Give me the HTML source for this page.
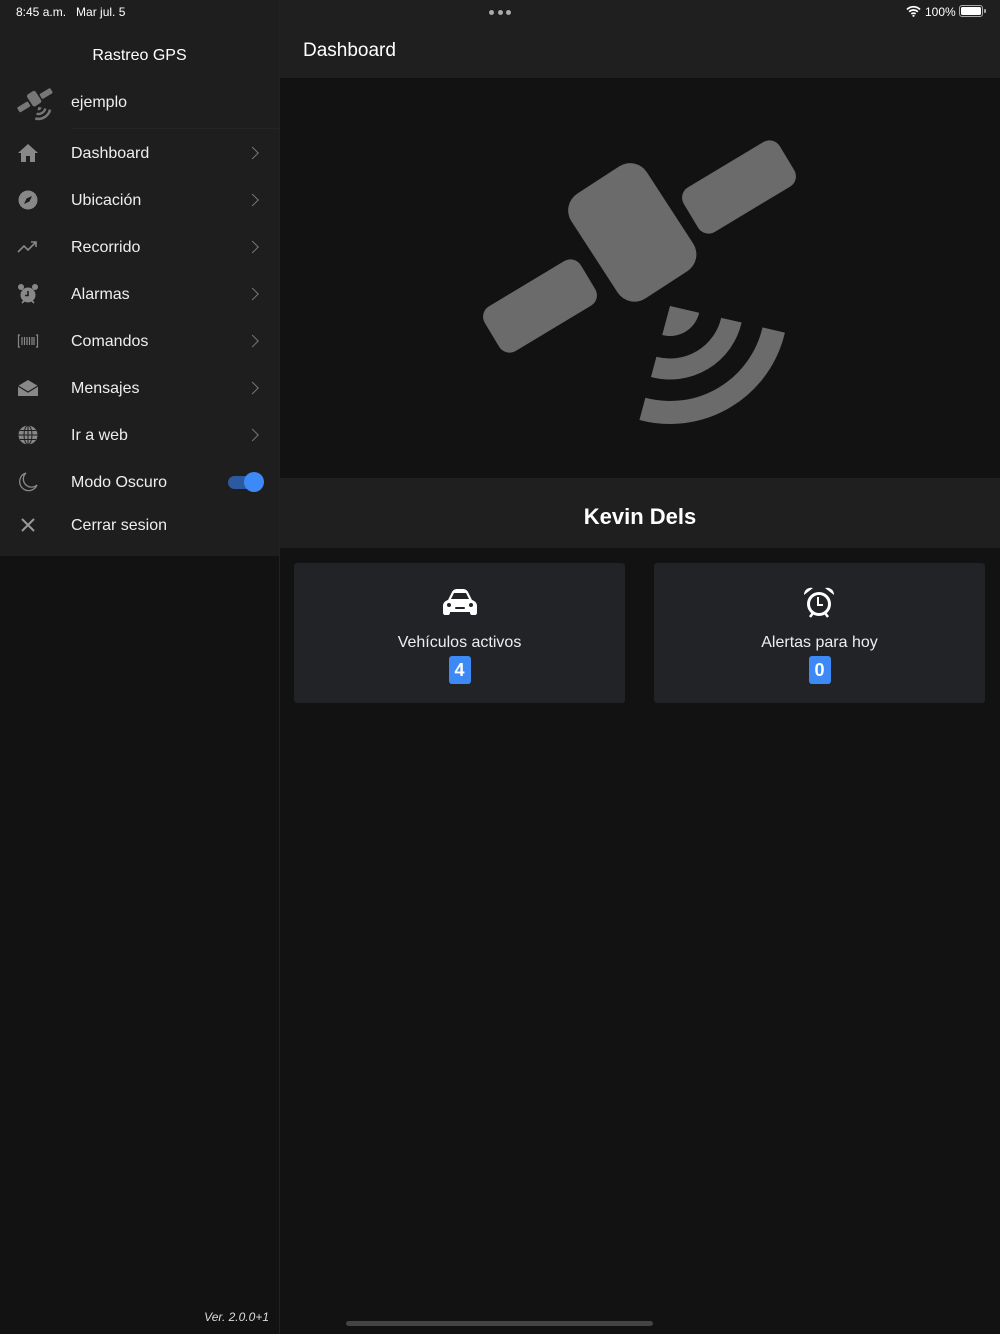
<!DOCTYPE html>
<html><head><meta charset="utf-8"><style>
*{margin:0;padding:0;box-sizing:border-box}
body{width:1000px;height:1334px;background:#121212;font-family:"Liberation Sans",sans-serif;color:#fff;position:relative;overflow:hidden}
.a{position:absolute}
.side{left:0;top:0;width:279px;height:556px;background:#1e1e1e}
.sb{left:279px;top:0;width:1px;height:1334px;background:#222}
.row{position:absolute;left:71px;font-size:16px;color:#eee;transform:translateY(-45%)}
.chev{position:absolute;left:248px;width:9px;height:9px;border-right:1.6px solid #777;border-top:1.6px solid #777;transform:translateY(-50%) rotate(45deg)}
.ic{position:absolute;left:17px;width:22px;height:22px;transform:translateY(-50%)}
.card{position:absolute;top:563px;width:331px;height:140px;background:#222327;border-radius:3px;text-align:center}
.card .t{position:absolute;top:71px;width:100%;font-size:16px;color:#eee}
.badge{position:absolute;top:93px;left:50%;margin-left:-11px;width:22px;height:28px;background:#3d8af7;border-radius:3px;font-weight:bold;font-size:18px;line-height:28px;color:#fff}
</style></head><body>
<div class="a side"></div>
<div class="a sb"></div>
<div class="a" style="left:280px;top:0;width:720px;height:78px;background:#1f1f1f"></div>
<div class="a" style="left:280px;top:478px;width:720px;height:70px;background:#1f1f1f"></div>

<div class="a" style="left:16px;top:5px;font-size:12px;color:#fff">8:45 a.m.&nbsp;&nbsp; Mar jul. 5</div>
<div class="a" style="left:489px;top:10px;width:22px;height:5px;display:flex;justify-content:space-between"><i style="width:5px;height:5px;border-radius:50%;background:#aaa"></i><i style="width:5px;height:5px;border-radius:50%;background:#aaa"></i><i style="width:5px;height:5px;border-radius:50%;background:#aaa"></i></div>
<svg class="a" style="left:906px;top:5px" width="15" height="12" viewBox="0 0 15 12"><path d="M1 4.5a9 9 0 0 1 13 0M3.2 6.8a6 6 0 0 1 8.6 0M5.4 9a3 3 0 0 1 4.2 0" stroke="#fff" stroke-width="1.8" fill="none"/><circle cx="7.5" cy="10.8" r="1.1" fill="#fff"/></svg>
<div class="a" style="left:925px;top:5px;font-size:12px">100%</div>
<div class="a" style="left:959px;top:5px;width:24px;height:12px;border:1px solid #aaa;border-radius:3px;padding:1px"><div style="width:100%;height:100%;background:#fff;border-radius:1.5px"></div></div>
<div class="a" style="left:984px;top:9px;width:2px;height:4px;background:#aaa;border-radius:1px"></div>

<div class="a" style="left:0;width:279px;top:47px;text-align:center;font-size:16px;color:#fff">Rastreo GPS</div>

<svg class="a" style="left:15px;top:86px" width="40" height="36" viewBox="470 120 340 320"><g fill="#777"><rect x="587" y="170" width="90" height="125" rx="20" transform="rotate(-33 632 232)"/><rect x="484" y="280" width="112" height="52" rx="12" transform="rotate(-31 540 306)"/><rect x="683" y="161" width="112" height="52" rx="12" transform="rotate(-31 739 187)"/><path d="M670,306 L699.2,312.7 A30 30 0 0 1 662.2,335 Z"/></g><g stroke="#777" fill="none"><path d="M731.4,320.2 A63 63 0 0 1 653.7,366.9" stroke-width="21"/><path d="M773.7,330 A106.5 106.5 0 0 1 642.4,408.9" stroke-width="23"/></g></svg>
<div class="row" style="top:102px">ejemplo</div>
<div class="a" style="left:71px;top:128px;width:208px;height:1px;background:#252525"></div>

<svg class="ic" style="top:153px" viewBox="0 0 22 22"><path d="M11 2L1 11h3v9h5v-6h4v6h5v-9h3z" fill="#888"/></svg>
<div class="row" style="top:153px">Dashboard</div><div class="chev" style="top:153px"></div>

<svg class="ic" style="top:200px" viewBox="0 0 22 22"><circle cx="11" cy="11" r="9.5" fill="#888"/><path d="M15 7l-5.5 2.5L7 15l5.5-2.5z" fill="#1e1e1e"/></svg>
<div class="row" style="top:200px">Ubicación</div><div class="chev" style="top:200px"></div>

<svg class="ic" style="top:247px" viewBox="0 0 22 22"><path d="M1 16l6-6 4 4 8-8M14 6h5v5" stroke="#888" stroke-width="1.6" fill="none"/></svg>
<div class="row" style="top:247px">Recorrido</div><div class="chev" style="top:247px"></div>

<svg class="ic" style="top:294px" viewBox="0 0 22 22"><circle cx="11" cy="12" r="7.5" fill="#888"/><circle cx="4" cy="4" r="3" fill="#888"/><circle cx="18" cy="4" r="3" fill="#888"/><path d="M11 8v4.5h-3" stroke="#1e1e1e" stroke-width="1.6" fill="none"/><path d="M5 20l2-2M17 20l-2-2" stroke="#888" stroke-width="1.6"/></svg>
<div class="row" style="top:294px">Alarmas</div><div class="chev" style="top:294px"></div>

<svg class="ic" style="top:341px" viewBox="0 0 22 22"><path d="M3 5H1.5v12H3M19 5h1.5v12H19M5 7v8M7.5 7v8M10 7v8M12.5 7v8M15 7v8M17 7v8" stroke="#888" stroke-width="1.2" fill="none"/></svg>
<div class="row" style="top:341px">Comandos</div><div class="chev" style="top:341px"></div>

<svg class="ic" style="top:388px" viewBox="0 0 22 22"><path d="M1 9l10-6 10 6v10H1z" fill="#888"/><path d="M1 9l10 6 10-6" stroke="#1e1e1e" stroke-width="1.2" fill="none"/></svg>
<div class="row" style="top:388px">Mensajes</div><div class="chev" style="top:388px"></div>

<svg class="ic" style="top:435px" viewBox="0 0 22 22"><circle cx="11" cy="11" r="9.5" fill="#888"/><g stroke="#1e1e1e" stroke-width="1" fill="none"><ellipse cx="11" cy="11" rx="4" ry="9.5"/><path d="M11 1.5v19M1.5 11h19M3 6.5h16M3 15.5h16"/></g></svg>
<div class="row" style="top:435px">Ir a web</div><div class="chev" style="top:435px"></div>

<svg class="ic" style="top:482px" viewBox="0 0 22 22"><path d="M9 2a9 9 0 1 0 11 12A8 8 0 0 1 9 2z" stroke="#888" stroke-width="1.3" fill="none"/></svg>
<div class="row" style="top:482px">Modo Oscuro</div>
<div class="a" style="left:228px;top:476px;width:32px;height:13px;border-radius:7px;background:#2c5aa0"></div>
<div class="a" style="left:244px;top:472px;width:20px;height:20px;border-radius:50%;background:#3d8af7"></div>

<svg class="ic" style="top:525px" viewBox="0 0 22 22"><path d="M5 5l12 12M17 5L5 17" stroke="#999" stroke-width="2"/></svg>
<div class="row" style="top:525px">Cerrar sesion</div>

<div class="a" style="left:0;width:269px;top:1310px;text-align:right;font-size:12px;font-style:italic;color:#ddd">Ver. 2.0.0+1</div>

<div class="a" style="left:303px;top:51px;font-size:19px;transform:translateY(-50%);color:#fff">Dashboard</div>

<svg class="a" style="left:470px;top:120px" width="340" height="320" viewBox="470 120 340 320"><g fill="#6b6b6b"><rect x="587" y="170" width="90" height="125" rx="20" transform="rotate(-33 632 232)"/><rect x="484" y="280" width="112" height="52" rx="12" transform="rotate(-31 540 306)"/><rect x="683" y="161" width="112" height="52" rx="12" transform="rotate(-31 739 187)"/><path d="M670,306 L699.2,312.7 A30 30 0 0 1 662.2,335 Z"/></g><g stroke="#6b6b6b" fill="none"><path d="M731.4,320.2 A63 63 0 0 1 653.7,366.9" stroke-width="21"/><path d="M773.7,330 A106.5 106.5 0 0 1 642.4,408.9" stroke-width="23"/></g></svg>

<div class="a" style="left:280px;width:720px;top:517px;transform:translateY(-50%);text-align:center;font-size:22px;font-weight:bold">Kevin Dels</div>

<div class="card" style="left:294px">
<svg style="position:absolute;left:146px;top:25px" width="40" height="30" viewBox="0 0 40 30"><path d="M8 12l4-8c1-2 3-3 5-3h6c2 0 4 1 5 3l4 8c3 1 5 3 5 6v7c0 1-1 2-2 2h-3c-1 0-2-1-2-2v-1H10v1c0 1-1 2-2 2H5c-1 0-2-1-2-2v-7c0-3 2-5 5-6z" fill="#fff"/><path d="M11 11l3-6h12l3 6z" fill="#222327"/><circle cx="9" cy="17" r="2" fill="#222327"/><circle cx="31" cy="17" r="2" fill="#222327"/><rect x="15" y="19" width="10" height="2" rx="1" fill="#222327"/></svg>
<div class="t">Vehículos activos</div><div class="badge">4</div></div>

<div class="card" style="left:654px">
<svg style="position:absolute;left:148px;top:23px" width="34" height="34" viewBox="0 0 34 34"><circle cx="17" cy="18" r="12" fill="#fff"/><circle cx="17" cy="18" r="9" fill="#222327"/><path d="M2 9a7 7 0 0 1 9-7zM32 9a7 7 0 0 0-9-7z" fill="#fff"/><path d="M16 11v8h5" stroke="#fff" stroke-width="2" fill="none"/><path d="M8 31l3-4M26 31l-3-4" stroke="#fff" stroke-width="2.5"/></svg>
<div class="t">Alertas para hoy</div><div class="badge">0</div></div>

<div class="a" style="left:346px;top:1321px;width:307px;height:5px;border-radius:3px;background:#444"></div>
</body></html>
